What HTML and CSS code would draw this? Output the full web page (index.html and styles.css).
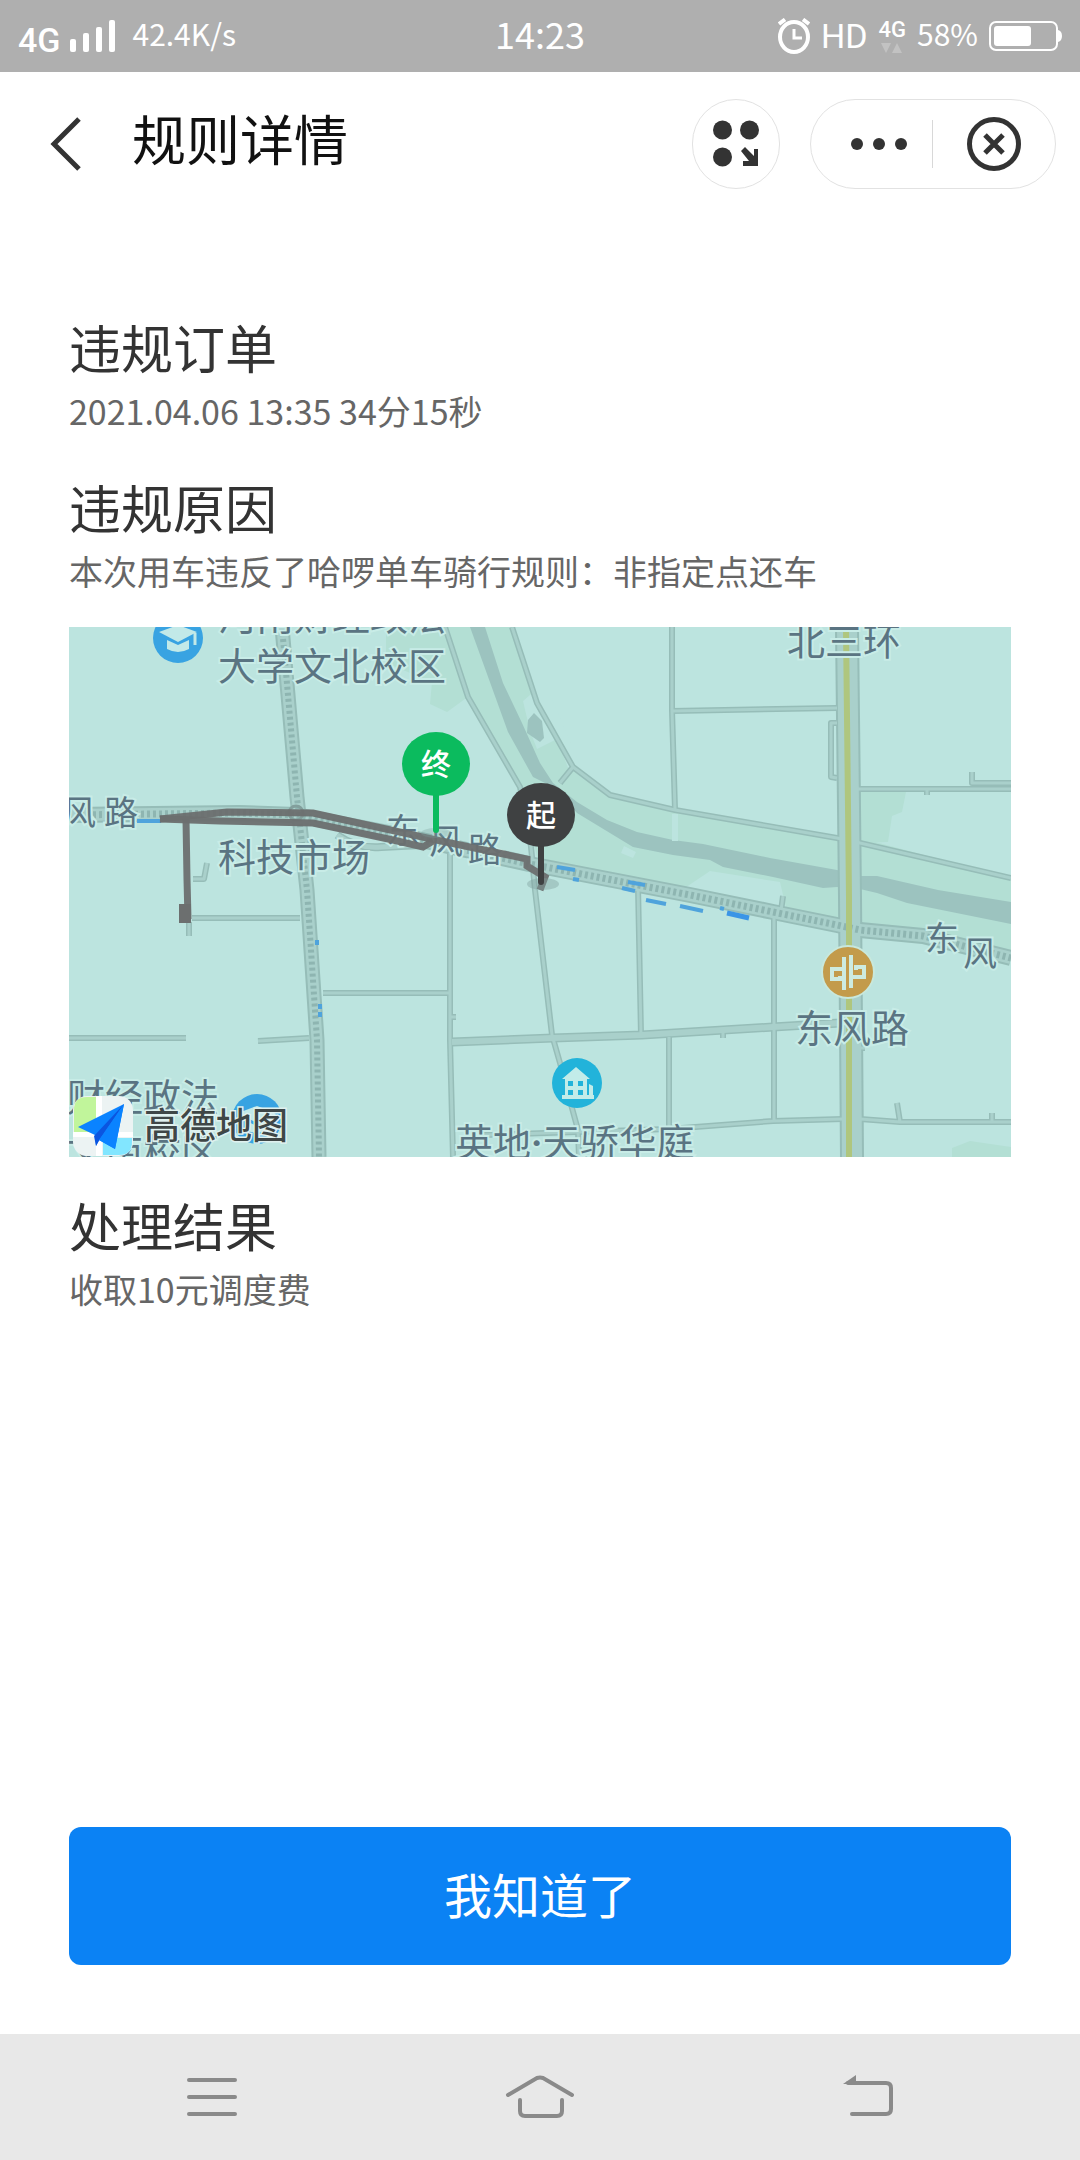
FILE: index.html
```html
<!DOCTYPE html>
<html lang="zh-CN">
<head>
    <meta charset="utf-8">
    <title>规则详情</title>
    <meta name="viewport" content="width=device-width, initial-scale=1">
    <link rel="stylesheet" href="styles.css">
</head>
<body>
    <div class="status-bar">
        <div class="status-left">
            <span class="network">4G</span>
            <svg class="signal" width="46" height="32" viewBox="0 0 46 32" fill="#fff" aria-hidden="true">
                <rect x="0" y="19" width="6" height="13" rx="2"/>
                <rect x="13" y="13" width="6" height="19" rx="2"/>
                <rect x="26" y="7" width="6" height="25" rx="2"/>
                <rect x="39" y="0" width="6" height="32" rx="2"/>
            </svg>
            <span class="speed">42.4K/s</span>
        </div>
        <div class="clock">14:23</div>
        <div class="status-right">
            <svg width="32" height="36" viewBox="0 0 32 36" fill="none" stroke="#fff" aria-hidden="true">
                <ellipse cx="16" cy="19" rx="14" ry="15" stroke-width="4"/>
                <path d="M16 11v9h8" stroke-width="3"/>
                <path d="M1 6l6-4.500M31 6l-6-4.500" stroke-width="4"/>
            </svg>
            <span class="hd">HD</span>
            <span class="data">
                <span class="data-label">4G</span>
                <svg width="22" height="10" viewBox="0 0 22 10" fill="#c2c2c2" aria-hidden="true">
                    <path d="M0 0h10l-5 10zM11 10h10l-5-10z"/>
                </svg>
            </span>
            <span class="percent">58%</span>
            <svg width="73" height="30" viewBox="0 0 73 30" aria-hidden="true">
                <rect x="1" y="1" width="67" height="28" rx="6" fill="none" stroke="#fff" stroke-width="2"/>
                <rect x="5" y="5" width="37" height="20" rx="3" fill="#fff"/>
                <path d="M69 9q4 1 4 6t-4 6z" fill="#fff"/>
            </svg>
        </div>
    </div>

    <header class="title-bar">
        <button class="back" type="button" aria-label="返回">
            <svg width="32" height="54" viewBox="0 0 32 54" fill="none" stroke="#333" stroke-width="5">
                <path d="M29 2L4 27l25 25"/>
            </svg>
        </button>
        <h1 class="title">规则详情</h1>
        <button class="apps" type="button" aria-label="小程序">
            <svg width="46" height="48" viewBox="0 0 46 48" fill="#333">
                <circle cx="9.500" cy="10" r="9.500"/>
                <circle cx="36.500" cy="10" r="9.500"/>
                <circle cx="9.500" cy="37" r="9.500"/>
                <path d="M28 31l4-4 9 9v-7h4v17H30v-5h6z"/>
            </svg>
        </button>
        <div class="capsule">
            <button class="more" type="button" aria-label="更多">
                <svg width="58" height="14" viewBox="0 0 58 14" fill="#333">
                    <circle cx="7" cy="7" r="6"/>
                    <circle cx="29" cy="7" r="6"/>
                    <circle cx="51" cy="7" r="6"/>
                </svg>
            </button>
            <button class="close" type="button" aria-label="关闭">
                <svg width="54" height="54" viewBox="0 0 54 54" fill="none" stroke="#333" stroke-width="5">
                    <circle cx="27" cy="27" r="24.500"/>
                    <path d="M18 18l18 18M36 18L18 36"/>
                </svg>
            </button>
        </div>
    </header>

    <main>
        <section>
            <h2>违规订单</h2>
            <p>2021.04.06 13:35 34分15秒</p>
        </section>
        <section>
            <h2>违规原因</h2>
            <p>本次用车违反了哈啰单车骑行规则：非指定点还车</p>
            <svg class="map" viewBox="0 0 942 530" role="img" aria-label="行程地图">
                <defs>
                    <!-- cap and book, used by both school markers -->
                    <g id="school">
                        <circle r="25" fill="#38a3e2"/>
                        <path d="M-19-6L0-13l19 7L0 4z" fill="#c2e9e8"/>
                        <path d="M-11 2L0 7l11-5v9q-11 6-22 0z" fill="#c2e9e8"/>
                        <path d="M17-5V7" stroke="#c2e9e8" stroke-width="3"/>
                    </g>
                    <g id="streets">
                        <path d="M376 0l23 70 52 90 9 40 3 30 3 33 17 145 8 28 12 45 6 22 1 27"/>
                        <path d="M443 0l25 76 36 64 37 28 65 15 162 28 23 5 151 35M504 140l-13 16"/>
                        <path d="M603 0v83l3 100M603 84l165-3M789 162h153M903 145v11h39M768 96h-6v54l6 1M858 162v6"/>
                        <path d="M124 252h11l3-16M120 295v14M123 291h108M0 411h117M189 414l51-3M254 366h127M381 226v187l3 117M381 390h6"/>
                        <path d="M569 259l3 149M600 410v92M705 290v204M414 508l186-6 104-8 70-2M791 492l40 3h111M828 476l3 19M923 486v9M712 284l2-15M654 404v7M789 421h7"/>
                    </g>
                    <path id="avenue" d="M383 415l101-4 89-3 131-8 67-4"/>
                    <path id="rail" d="M213 0l15 170 10 93 10 150 2 117"/>
                    <path id="dongfeng" d="M0 188l170-2 57 2 103 20 130 29 11 2 150 29 83 17 64 13 23 5 63 6 88 22"/>
                </defs>
                <rect width="942" height="530" fill="#bce4df"/>

                <g fill="#b3dfd4">
                    <path d="M317 0h59l24 69-22 16-17-8 2-22-46-19z"/>
                    <path d="M376 0h67l25 76 36 64 37 28 65 15 162 28h23l151 40v77l-88-22-63-6-23-5-50-10-7-30-70-11-37 25-133-27-11-45-9-37-52-90z"/>
                    <path d="M789 165h48l-4 20-10 4-4 26-28 1zM883 521l18-7 41 6v10h-59z"/>
                </g>
                <path d="M454 74l22-19 34 81-9 10-13-34-20 10-7-18z" fill="#bce4df"/>
                <path d="M401 0l38 105 25 45 20 10 24 26 56 34 40 8 37 5 13 7 50 10 50 11 14-1 23 2 17 4 30 10 104 21v-22l-73-12-61-14h-17l-23-6-67-12-67-14-30-4-36-8-30-12-30-18-24-19-13-20-18-40-19-40L416 0z" fill="#9cc3bf"/>
                <path d="M459 93l6-7 8 8 2 17-4 4-13-9z" fill="#9cc3bf"/>
                <path d="M555 219l12 6-3 6-12-5zM603 187h6v27h-6z" fill="#bce4df"/>

                <!-- roads: dark casing first, lighter body over it -->
                <g fill="none" stroke-linejoin="round">
                    <g stroke="#96bdb8">
                        <use href="#streets" stroke-width="6"/>
                        <use href="#avenue" stroke-width="9"/>
                        <use href="#rail" stroke-width="15"/>
                        <use href="#dongfeng" stroke-width="16"/>
                        <path d="M268 208q20 14 44 12l60-3" stroke-width="8"/>
                        <path d="M778 0l3 270 2 260" stroke-width="24"/>
                    </g>
                    <g stroke="#a9d0cb">
                        <use href="#streets" stroke-width="3"/>
                        <use href="#avenue" stroke-width="6"/>
                        <use href="#rail" stroke-width="11"/>
                        <use href="#dongfeng" stroke-width="12"/>
                        <path d="M268 208q20 14 44 12l60-3" stroke-width="5"/>
                        <path d="M778 0l3 270 2 260" stroke-width="20"/>
                    </g>
                    <g stroke="#8eb5b1" stroke-dasharray="3 3">
                        <use href="#rail" stroke-width="6"/>
                        <use href="#dongfeng" stroke-width="7"/>
                    </g>
                    <path d="M777 0l3 270v260" stroke="#afc67e" stroke-width="6"/>
                    <path d="M68 194h24M488 240l18 3M504 252l6 1M559 255l17 3M553 261l13 3M577 273l20 4M611 279l23 5M651 281l4 1M248 313v5M251 377v5M251 385v5" stroke="#4fa3dc" stroke-width="4"/>
                    <path d="M658 286l22 5" stroke="#3b95e6" stroke-width="5"/>
                    <circle cx="227" cy="186" r="7" stroke="#829f9c" stroke-width="3"/>
                </g>

                <g class="place">
                    <text x="149" y="3">河南财经政法</text>
                    <text x="149" y="53">大学文北校区</text>
                    <text x="149" y="244">科技市场</text>
                    <text x="718" y="28">北三环</text>
                    <text x="726" y="415">东风路</text>
                    <text x="386" y="529">英地<tspan class="dot">·</tspan>天骄华庭</text>
                    <text x="-2" y="484">财经政法</text>
                    <text x="-2" y="539">文南校区</text>
                </g>
                <g class="road-name">
                    <text x="10" y="198">风</text>
                    <text x="52" y="198">路</text>
                    <text x="334" y="216">东</text>
                    <text x="377" y="227">风</text>
                    <text x="416" y="235">路</text>
                    <text x="873" y="324">东</text>
                    <text x="911" y="339">风</text>
                </g>

                <g fill="none" stroke="#6c6f6f" stroke-width="7" stroke-opacity=".95">
                    <path d="M91 192l67-7 86 1 114 25 33 7 67 14v7l18 11-5 13"/>
                    <path d="M91 192l60 2 93 2 80 17 30 7 10-6"/>
                    <path d="M117 192l1 60 1 40"/>
                </g>
                <path d="M110 277h12v19h-12z" fill="#6c6f6f"/>

                <use href="#school" x="109" y="11"/>
                <use href="#school" x="188" y="492"/>
                <g transform="translate(779 345)">
                    <circle r="26" fill="#c39b4b" stroke="#c8e8dc" stroke-width="2"/>
                    <path d="M-4-15v33M-4-3h-12v10h8V4M3 16v-33M3 5h13V-5H8v3" fill="none" stroke="#cdebe0" stroke-width="4"/>
                </g>
                <g transform="translate(508 456)">
                    <circle r="25" fill="#22b3da"/>
                    <path d="M-15-4L-1-16 13-4h-3v16h2V1l4 2v9h1v4h-32v-4h3V-4z" fill="#c2ece9"/>
                    <path d="M-9-2h5v5h-5zM1-2h5v5H1zM-9 7h5v5h-5zM1 7h5v5H1z" fill="#22b3da"/>
                </g>

                <g class="pin">
                    <ellipse cx="367" cy="206" rx="15" ry="5" fill="#7c9e9b" fill-opacity=".3"/>
                    <path d="M367 165v38" stroke="#0bbb5e" stroke-width="6" stroke-linecap="round"/>
                    <ellipse cx="367" cy="137" rx="34" ry="32" fill="#0bbb5e"/>
                    <text x="367" y="148">终</text>
                    <ellipse cx="474" cy="257" rx="16" ry="6" fill="#7c9e9b" fill-opacity=".4"/>
                    <path d="M472 216v39" stroke="#3f4142" stroke-width="6" stroke-linecap="round"/>
                    <ellipse cx="472" cy="188" rx="34" ry="32" fill="#3f4142"/>
                    <text x="472" y="199">起</text>
                </g>

                <g transform="translate(4 469)">
                    <rect width="60" height="60" rx="14" fill="#ecf3f3"/>
                    <path d="M1 36V14Q1 1 14 1h9v35z" fill="#c1f59b"/>
                    <path d="M30 42h29v4q0 13-13 13H30z" fill="#82e6ff"/>
                    <path d="M23 0h6v60h-6zM0 36h60v5H0z" fill="#fff"/>
                    <path d="M5 31L51 8l-9 45-16-9-3 6-1-11z" fill="#0a83ff"/>
                    <path d="M51 8L21 40l2 10 4-7z" fill="#0b55e0"/>
                    <path d="M51 8L26 44l16 9z" fill="#0a83ff"/>
                </g>
                <text class="map-brand" x="75" y="512">高德地图</text>
            </svg>
        </section>
        <section>
            <h2>处理结果</h2>
            <p>收取10元调度费</p>
        </section>
        <button class="confirm" type="button">我知道了</button>
    </main>

    <nav class="system-nav">
        <button type="button" aria-label="最近任务">
            <svg width="50" height="44" viewBox="0 0 50 44" fill="none" stroke="#8a8a8a" stroke-width="4" stroke-linecap="round">
                <path d="M2 5h46M2 22h46M2 39h46"/>
            </svg>
        </button>
        <button type="button" aria-label="主屏幕">
            <svg width="70" height="44" viewBox="0 0 70 44" fill="none" stroke="#8a8a8a" stroke-width="4" stroke-linecap="round" stroke-linejoin="round">
                <path d="M3 20L32 3q3-1 6 0l29 17M15 25v11q0 5 5 5h32q5 0 5-5V25"/>
            </svg>
        </button>
        <button type="button" aria-label="返回上一页">
            <svg width="52" height="44" viewBox="0 0 52 44" fill="none" stroke="#8a8a8a" stroke-width="4" stroke-linecap="round">
                <path d="M6 8h38q5 0 5 5v21q0 5-5 5H10"/>
                <path d="M1 9L14 0v9z" fill="#8a8a8a" stroke="none"/>
            </svg>
        </button>
    </nav>
</body>
</html>
```
FILE: styles.css
```css
* { box-sizing: border-box; margin: 0; padding: 0; }
body {
    font-family: "Noto Sans CJK SC", "Noto Sans", sans-serif;
    min-height: 100vh;
    display: flex;
    flex-direction: column;
    background-color: #fff;
    color: #333;
}
button {
    font-family: inherit;
    border: 0;
    background: none;
    display: flex;
    align-items: center;
    justify-content: center;
}
svg { display: block; flex: none; }

/* phone status bar */
.status-bar {
    height: 72px;
    padding: 0 18px;
    display: grid;
    grid-template-columns: 1fr auto 1fr;
    align-items: center;
    background-color: #afafaf;
    color: #fff;
}
.status-left, .status-right {
    display: flex;
    align-items: center;
}
.status-right { justify-content: flex-end; gap: 11px; }
.network {
    font: 500 34px/40px Roboto, sans-serif;
    padding-top: 8px;
    margin-right: 10px;
}
.signal { margin-right: 16px; }
.speed, .percent, .clock { line-height: 40px; padding-bottom: 6px; }
.speed, .percent { font-size: 30px; }
.clock { font-size: 36px; }
.hd { font: 400 34px/40px Roboto, sans-serif; }
.data {
    display: flex;
    flex-direction: column;
    align-items: center;
    gap: 2px;
}
.data-label { font: 500 22px/22px Roboto, sans-serif; }

/* title bar */
.title-bar {
    display: flex;
    align-items: center;
    padding: 27px 24px 27px 50px;
}
.back { margin-right: 50px; }
.title {
    font-size: 54px;
    font-weight: 400;
    line-height: 72px;
    padding-bottom: 12px;
    margin-right: auto;
    color: #111;
}
.apps {
    width: 88px;
    height: 90px;
    border: 1px solid #e2e2e2;
    border-radius: 45px;
    margin-right: 30px;
}
.capsule {
    height: 90px;
    display: flex;
    align-items: center;
    border: 1px solid #e2e2e2;
    border-radius: 45px;
}
.more, .close { width: 122px; height: 48px; }
.more {
    padding-left: 14px;
    border-right: 1px solid #d8d8d8;
}

main {
    flex: 1;
    display: flex;
    flex-direction: column;
    gap: 36px;
    padding: 99px 69px 69px;
}
h2 { font-size: 52px; font-weight: 400; line-height: 64px; }
p {
    margin-top: 4px;
    font-size: 34px;
    line-height: 56px;
    color: #666;
}

/* route map */
.map { width: 100%; height: auto; margin-top: 28px; overflow: hidden; }
.place, .road-name {
    font-size: 38px;
    fill: #5a7482;
    stroke: #c8ece7;
    stroke-width: 4px;
    paint-order: stroke;
}
.dot { font-family: Roboto, sans-serif; font-weight: 700; }
.road-name { font-size: 34px; text-anchor: middle; }
.pin text {
    font-size: 30px;
    font-weight: 500;
    text-anchor: middle;
    fill: #fff;
}
.map-brand {
    font-size: 36px;
    font-weight: 500;
    fill: #3f4747;
    stroke: #dff1ef;
    stroke-width: 3px;
    paint-order: stroke;
}

.confirm {
    margin-top: auto;
    height: 138px;
    padding-bottom: 6px;
    border-radius: 12px;
    background-color: #0b82f4;
    color: #fff;
    font-size: 48px;
}

/* system buttons */
.system-nav {
    height: 126px;
    padding: 0 48px;
    display: flex;
    background-color: #e8e8e8;
}
.system-nav button { flex: 1; }
```
